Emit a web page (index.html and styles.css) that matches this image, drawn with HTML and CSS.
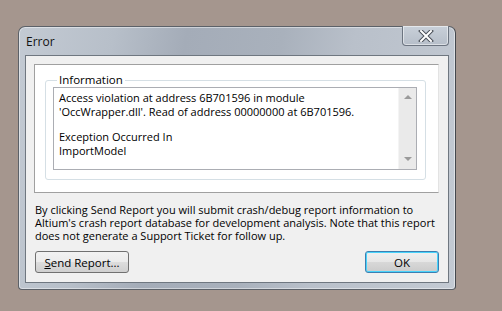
FILE: index.html
```html
<!DOCTYPE html>
<html lang="en">
<head>
  <meta charset="UTF-8" />
  <title>Error</title>
  <link rel="stylesheet" href="styles.css">
</head>

<body>
  <div class="window">
    <div class="titlebar">
      <span class="title">Error</span>
      <div class="close-btn">
        <svg width="16" height="12" viewBox="0 0 16 12">
          <path d="M3 1 L13 11 M13 1 L3 11" stroke="#4a4f58" stroke-width="4" stroke-linecap="square" />
          <path d="M3 1 L13 11 M13 1 L3 11" stroke="#ffffff" stroke-width="2" stroke-linecap="square" />
        </svg>
      </div>
    </div>

    <div class="client">
      <div class="panel">
        <fieldset class="group">
          <legend>Information</legend>
          <div class="memo">
            <div class="memo-text">
              <p>Access violation at address 6B701596 in module<br>'OccWrapper.dll'. Read of address 00000000 at 6B701596.</p>
              <p>Exception Occurred In<br>ImportModel</p>
            </div>
            <div class="scrollbar">
              <span class="arrow up"></span>
              <span class="arrow down"></span>
            </div>
          </div>
        </fieldset>
      </div>

      <p class="note">By clicking Send Report you will submit crash/debug report information to Altium's crash report database for development analysis. Note that this report does not generate a Support Ticket for follow up.</p>

      <div class="buttons">
        <button class="btn send"><u>S</u>end Report...</button>
        <button class="btn ok">OK</button>
      </div>
    </div>
  </div>
</body>
</html>
```

FILE: styles.css
```css
body {
  margin: 0;
  background: #a5968e;
  font-family: "Open Sans", sans-serif;
  font-size: 11px;
  color: #000;
}
.window {
  box-sizing: border-box;
  width: 438px;
  height: 264px;
  margin: 26px 0 0 18px;
  border: 1px solid #5c6168;
  border-right-color: #44484e;
  border-radius: 7px 7px 4px 4px;
  background: linear-gradient(100deg, #c3cad3 0%, #b7bfc9 20%, #a4acb8 35%, #a9b1bc 55%, #b9c0ca 70%, #c3cad3 100%);
  padding: 0 6px 6px 6px;
  display: flex;
  flex-direction: column;
  box-shadow: inset 0 0 0 1px rgba(255,255,255,0.45);
}
.titlebar {
  height: 28px;
  display: flex;
  justify-content: space-between;
  align-items: flex-start;
}
.title {
  margin-top: 6px;
  margin-left: 1px;
  font-size: 12px;
  color: #111;
}
.close-btn {
  box-sizing: border-box;
  width: 47px;
  height: 20px;
  margin-top: -1px;
  border: 1px solid #6c7480;
  border-top: none;
  border-radius: 0 0 4px 4px;
  background: linear-gradient(#c9d0d9, #b6bec9);
  box-shadow: inset 0 0 0 1px rgba(255,255,255,0.5);
  display: flex;
  justify-content: center;
  align-items: center;
}
.client {
  flex: 1;
  background: #f0f0f0;
  border: 1px solid #6f7780;
  padding: 8px 9px 0 8px;
}
.panel {
  background: #fff;
  border: 1px solid #a0a0a0;
  border-right-color: #e3e3e3;
  height: 129px;
  box-sizing: border-box;
  padding: 8px 12px 0 10px;
}
.group {
  margin: 0;
  padding: 0 8px 8px 7px;
  border: 1px solid #d5dfe5;
  border-radius: 3px;
  height: 107px;
  box-sizing: border-box;
}
.group legend {
  padding: 0 2px;
  margin-left: 4px;
  color: #000;
  line-height: 14px;
  font-size: 11.5px;
}
.memo {
  display: flex;
  border: 1px solid #abadb3;
  height: 83px;
  box-sizing: border-box;
}
.memo-text {
  flex: 1;
  padding: 3px 5px;
  line-height: 13.5px;
}
.memo-text p {
  margin: 0 0 12px 0;
}
.scrollbar {
  width: 17px;
  background: #eaeaea;
  border-left: 1px solid #f4f4f4;
  display: flex;
  flex-direction: column;
  justify-content: space-between;
  align-items: center;
  padding: 7px 0 8px;
}
.arrow {
  width: 0;
  height: 0;
  border-left: 4px solid transparent;
  border-right: 4px solid transparent;
}
.arrow.up {
  border-bottom: 4px solid #9a9a9a;
}
.arrow.down {
  border-top: 4px solid #9a9a9a;
}
.note {
  margin: 10px 0 0 1px;
  line-height: 13px;
}
.buttons {
  display: flex;
  justify-content: space-between;
  margin-top: 9px;
  padding-left: 1px;
}
.btn {
  height: 22px;
  font-family: "Open Sans", sans-serif;
  font-size: 11.5px;
  border: 1px solid #707070;
  border-radius: 3px;
  background: linear-gradient(#f2f2f2 0%, #ebebeb 50%, #dddddd 51%, #cfcfcf 100%);
  padding: 0;
  color: #000;
}
.btn.send {
  width: 94px;
}
.btn.ok {
  width: 74px;
  border-color: #3c7fb1;
  box-shadow: inset 0 0 0 1px #48d3fb;
  background: linear-gradient(#f0f0f0 0%, #e6e6e6 50%, #d8d8d8 51%, #cbcbcb 100%);
}
```
